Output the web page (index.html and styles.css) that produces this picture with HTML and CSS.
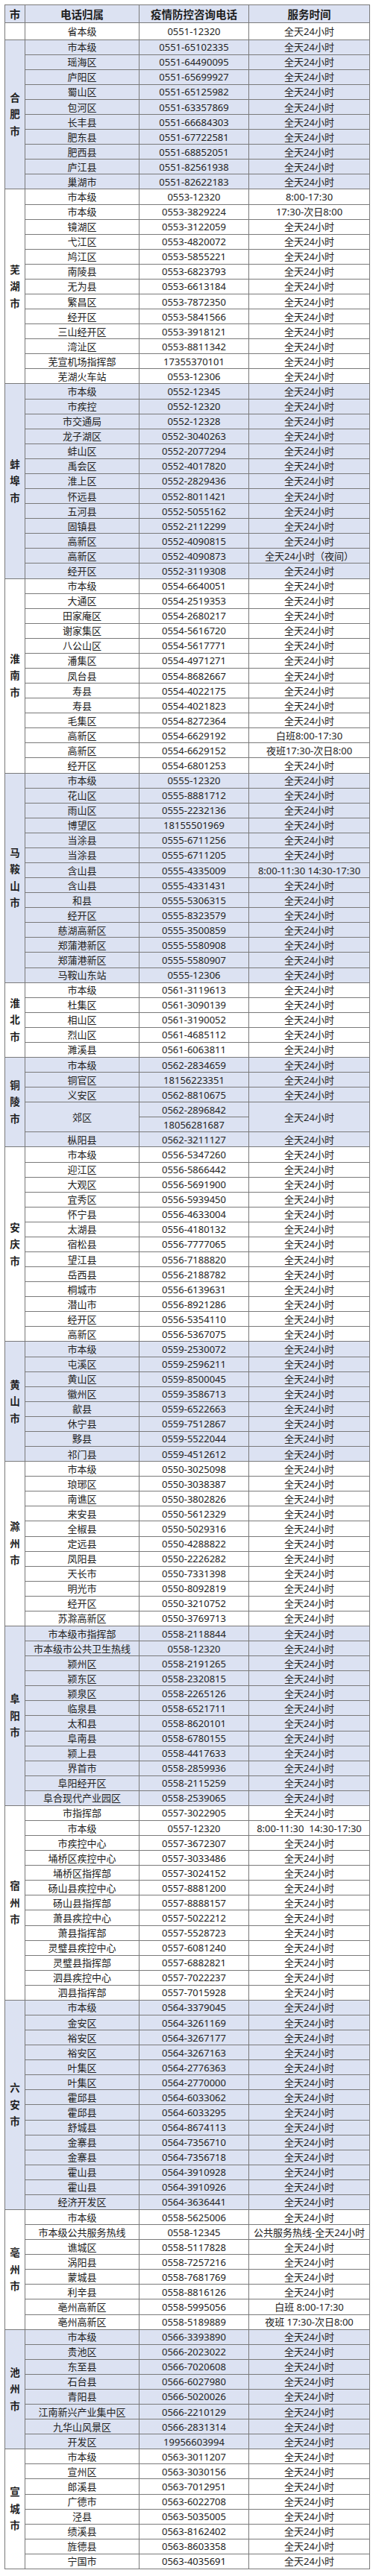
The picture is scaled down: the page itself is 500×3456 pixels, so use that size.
FILE: index.html
```html
<!DOCTYPE html>
<html lang="zh-CN">
<head>
<meta charset="utf-8">
<title>安徽省疫情防控咨询电话</title>
<link rel="stylesheet" href="styles.css">
</head>
<body>
<div class="page">
<table class="hotline">
<colgroup><col class="c-city"><col class="c-name"><col class="c-tel"><col class="c-time"></colgroup>
<thead>
<tr><th>市</th><th>电话归属</th><th>疫情防控咨询电话</th><th>服务时间</th></tr>
</thead>
<tbody class="white prov">
<tr><td></td><td>省本级</td><td>0551-12320</td><td>全天24小时</td></tr>
</tbody>
<tbody class="blue">
<tr><td class="city" rowspan="10">合<br>肥<br>市</td><td>市本级</td><td>0551-65102335</td><td>全天24小时</td></tr>
<tr><td>瑶海区</td><td>0551-64490095</td><td>全天24小时</td></tr>
<tr><td>庐阳区</td><td>0551-65699927</td><td>全天24小时</td></tr>
<tr><td>蜀山区</td><td>0551-65125982</td><td>全天24小时</td></tr>
<tr><td>包河区</td><td>0551-63357869</td><td>全天24小时</td></tr>
<tr><td>长丰县</td><td>0551-66684303</td><td>全天24小时</td></tr>
<tr><td>肥东县</td><td>0551-67722581</td><td>全天24小时</td></tr>
<tr><td>肥西县</td><td>0551-68852051</td><td>全天24小时</td></tr>
<tr><td>庐江县</td><td>0551-82561938</td><td>全天24小时</td></tr>
<tr><td>巢湖市</td><td>0551-82622183</td><td>全天24小时</td></tr>
</tbody>
<tbody class="white">
<tr><td class="city" rowspan="13">芜<br>湖<br>市</td><td>市本级</td><td>0553-12320</td><td>8:00-17:30</td></tr>
<tr><td>市本级</td><td>0553-3829224</td><td>17:30-次日8:00</td></tr>
<tr><td>镜湖区</td><td>0553-3122059</td><td>全天24小时</td></tr>
<tr><td>弋江区</td><td>0553-4820072</td><td>全天24小时</td></tr>
<tr><td>鸠江区</td><td>0553-5855221</td><td>全天24小时</td></tr>
<tr><td>南陵县</td><td>0553-6823793</td><td>全天24小时</td></tr>
<tr><td>无为县</td><td>0553-6613184</td><td>全天24小时</td></tr>
<tr><td>繁昌区</td><td>0553-7872350</td><td>全天24小时</td></tr>
<tr><td>经开区</td><td>0553-5841566</td><td>全天24小时</td></tr>
<tr><td>三山经开区</td><td>0553-3918121</td><td>全天24小时</td></tr>
<tr><td>湾沚区</td><td>0553-8811342</td><td>全天24小时</td></tr>
<tr><td>芜宣机场指挥部</td><td>17355370101</td><td>全天24小时</td></tr>
<tr><td>芜湖火车站</td><td>0553-12306</td><td>全天24小时</td></tr>
</tbody>
<tbody class="blue">
<tr><td class="city" rowspan="13">蚌<br>埠<br>市</td><td>市本级</td><td>0552-12345</td><td>全天24小时</td></tr>
<tr><td>市疾控</td><td>0552-12320</td><td>全天24小时</td></tr>
<tr><td>市交通局</td><td>0552-12328</td><td>全天24小时</td></tr>
<tr><td>龙子湖区</td><td>0552-3040263</td><td>全天24小时</td></tr>
<tr><td>蚌山区</td><td>0552-2077294</td><td>全天24小时</td></tr>
<tr><td>禹会区</td><td>0552-4017820</td><td>全天24小时</td></tr>
<tr><td>淮上区</td><td>0552-2829436</td><td>全天24小时</td></tr>
<tr><td>怀远县</td><td>0552-8011421</td><td>全天24小时</td></tr>
<tr><td>五河县</td><td>0552-5055162</td><td>全天24小时</td></tr>
<tr><td>固镇县</td><td>0552-2112299</td><td>全天24小时</td></tr>
<tr><td>高新区</td><td>0552-4090815</td><td>全天24小时</td></tr>
<tr><td>高新区</td><td>0552-4090873</td><td>全天24小时（夜间）</td></tr>
<tr><td>经开区</td><td>0552-3119308</td><td>全天24小时</td></tr>
</tbody>
<tbody class="white">
<tr><td class="city" rowspan="13">淮<br>南<br>市</td><td>市本级</td><td>0554-6640051</td><td>全天24小时</td></tr>
<tr><td>大通区</td><td>0554-2519353</td><td>全天24小时</td></tr>
<tr><td>田家庵区</td><td>0554-2680217</td><td>全天24小时</td></tr>
<tr><td>谢家集区</td><td>0554-5616720</td><td>全天24小时</td></tr>
<tr><td>八公山区</td><td>0554-5617771</td><td>全天24小时</td></tr>
<tr><td>潘集区</td><td>0554-4971271</td><td>全天24小时</td></tr>
<tr><td>凤台县</td><td>0554-8682667</td><td>全天24小时</td></tr>
<tr><td>寿县</td><td>0554-4022175</td><td>全天24小时</td></tr>
<tr><td>寿县</td><td>0554-4021823</td><td>全天24小时</td></tr>
<tr><td>毛集区</td><td>0554-8272364</td><td>全天24小时</td></tr>
<tr><td>高新区</td><td>0554-6629192</td><td>白班8:00-17:30</td></tr>
<tr><td>高新区</td><td>0554-6629152</td><td>夜班17:30-次日8:00</td></tr>
<tr><td>经开区</td><td>0554-6801253</td><td>全天24小时</td></tr>
</tbody>
<tbody class="blue">
<tr><td class="city" rowspan="14">马<br>鞍<br>山<br>市</td><td>市本级</td><td>0555-12320</td><td>全天24小时</td></tr>
<tr><td>花山区</td><td>0555-8881712</td><td>全天24小时</td></tr>
<tr><td>雨山区</td><td>0555-2232136</td><td>全天24小时</td></tr>
<tr><td>博望区</td><td>18155501969</td><td>全天24小时</td></tr>
<tr><td>当涂县</td><td>0555-6711256</td><td>全天24小时</td></tr>
<tr><td>当涂县</td><td>0555-6711205</td><td>全天24小时</td></tr>
<tr><td>含山县</td><td>0555-4335009</td><td>8:00-11:30 14:30-17:30</td></tr>
<tr><td>含山县</td><td>0555-4331431</td><td>全天24小时</td></tr>
<tr><td>和县</td><td>0555-5306315</td><td>全天24小时</td></tr>
<tr><td>经开区</td><td>0555-8323579</td><td>全天24小时</td></tr>
<tr><td>慈湖高新区</td><td>0555-3500859</td><td>全天24小时</td></tr>
<tr><td>郑蒲港新区</td><td>0555-5580908</td><td>全天24小时</td></tr>
<tr><td>郑蒲港新区</td><td>0555-5580907</td><td>全天24小时</td></tr>
<tr><td>马鞍山东站</td><td>0555-12306</td><td>全天24小时</td></tr>
</tbody>
<tbody class="white">
<tr><td class="city" rowspan="5">淮<br>北<br>市</td><td>市本级</td><td>0561-3119613</td><td>全天24小时</td></tr>
<tr><td>杜集区</td><td>0561-3090139</td><td>全天24小时</td></tr>
<tr><td>相山区</td><td>0561-3190052</td><td>全天24小时</td></tr>
<tr><td>烈山区</td><td>0561-4685112</td><td>全天24小时</td></tr>
<tr><td>濉溪县</td><td>0561-6063811</td><td>全天24小时</td></tr>
</tbody>
<tbody class="blue">
<tr><td class="city" rowspan="6">铜<br>陵<br>市</td><td>市本级</td><td>0562-2834659</td><td>全天24小时</td></tr>
<tr><td>铜官区</td><td>18156223351</td><td>全天24小时</td></tr>
<tr><td>义安区</td><td>0562-8810675</td><td>全天24小时</td></tr>
<tr><td rowspan="2">郊区</td><td>0562-2896842</td><td rowspan="2">全天24小时</td></tr>
<tr><td>18056281687</td></tr>
<tr><td>枞阳县</td><td>0562-3211127</td><td>全天24小时</td></tr>
</tbody>
<tbody class="white">
<tr><td class="city" rowspan="13">安<br>庆<br>市</td><td>市本级</td><td>0556-5347260</td><td>全天24小时</td></tr>
<tr><td>迎江区</td><td>0556-5866442</td><td>全天24小时</td></tr>
<tr><td>大观区</td><td>0556-5691900</td><td>全天24小时</td></tr>
<tr><td>宜秀区</td><td>0556-5939450</td><td>全天24小时</td></tr>
<tr><td>怀宁县</td><td>0556-4633004</td><td>全天24小时</td></tr>
<tr><td>太湖县</td><td>0556-4180132</td><td>全天24小时</td></tr>
<tr><td>宿松县</td><td>0556-7777065</td><td>全天24小时</td></tr>
<tr><td>望江县</td><td>0556-7188820</td><td>全天24小时</td></tr>
<tr><td>岳西县</td><td>0556-2188782</td><td>全天24小时</td></tr>
<tr><td>桐城市</td><td>0556-6139631</td><td>全天24小时</td></tr>
<tr><td>潜山市</td><td>0556-8921286</td><td>全天24小时</td></tr>
<tr><td>经开区</td><td>0556-5354110</td><td>全天24小时</td></tr>
<tr><td>高新区</td><td>0556-5367075</td><td>全天24小时</td></tr>
</tbody>
<tbody class="blue">
<tr><td class="city" rowspan="8">黄<br>山<br>市</td><td>市本级</td><td>0559-2530072</td><td>全天24小时</td></tr>
<tr><td>屯溪区</td><td>0559-2596211</td><td>全天24小时</td></tr>
<tr><td>黄山区</td><td>0559-8500045</td><td>全天24小时</td></tr>
<tr><td>徽州区</td><td>0559-3586713</td><td>全天24小时</td></tr>
<tr><td>歙县</td><td>0559-6522663</td><td>全天24小时</td></tr>
<tr><td>休宁县</td><td>0559-7512867</td><td>全天24小时</td></tr>
<tr><td>黟县</td><td>0559-5522044</td><td>全天24小时</td></tr>
<tr><td>祁门县</td><td>0559-4512612</td><td>全天24小时</td></tr>
</tbody>
<tbody class="white">
<tr><td class="city" rowspan="11">滁<br>州<br>市</td><td>市本级</td><td>0550-3025098</td><td>全天24小时</td></tr>
<tr><td>琅琊区</td><td>0550-3038387</td><td>全天24小时</td></tr>
<tr><td>南谯区</td><td>0550-3802826</td><td>全天24小时</td></tr>
<tr><td>来安县</td><td>0550-5612329</td><td>全天24小时</td></tr>
<tr><td>全椒县</td><td>0550-5029316</td><td>全天24小时</td></tr>
<tr><td>定远县</td><td>0550-4288822</td><td>全天24小时</td></tr>
<tr><td>凤阳县</td><td>0550-2226282</td><td>全天24小时</td></tr>
<tr><td>天长市</td><td>0550-7331398</td><td>全天24小时</td></tr>
<tr><td>明光市</td><td>0550-8092819</td><td>全天24小时</td></tr>
<tr><td>经开区</td><td>0550-3210752</td><td>全天24小时</td></tr>
<tr><td>苏滁高新区</td><td>0550-3769713</td><td>全天24小时</td></tr>
</tbody>
<tbody class="blue">
<tr><td class="city" rowspan="12">阜<br>阳<br>市</td><td>市本级市指挥部</td><td>0558-2118844</td><td>全天24小时</td></tr>
<tr><td>市本级市公共卫生热线</td><td>0558-12320</td><td>全天24小时</td></tr>
<tr><td>颍州区</td><td>0558-2191265</td><td>全天24小时</td></tr>
<tr><td>颍东区</td><td>0558-2320815</td><td>全天24小时</td></tr>
<tr><td>颍泉区</td><td>0558-2265126</td><td>全天24小时</td></tr>
<tr><td>临泉县</td><td>0558-6521711</td><td>全天24小时</td></tr>
<tr><td>太和县</td><td>0558-8620101</td><td>全天24小时</td></tr>
<tr><td>阜南县</td><td>0558-6780155</td><td>全天24小时</td></tr>
<tr><td>颍上县</td><td>0558-4417633</td><td>全天24小时</td></tr>
<tr><td>界首市</td><td>0558-2859936</td><td>全天24小时</td></tr>
<tr><td>阜阳经开区</td><td>0558-2115259</td><td>全天24小时</td></tr>
<tr><td>阜合现代产业园区</td><td>0558-2539065</td><td>全天24小时</td></tr>
</tbody>
<tbody class="white">
<tr><td class="city" rowspan="13">宿<br>州<br>市</td><td>市指挥部</td><td>0557-3022905</td><td>全天24小时</td></tr>
<tr><td>市本级</td><td>0557-12320</td><td>8:00-11:30&nbsp; 14:30-17:30</td></tr>
<tr><td>市疾控中心</td><td>0557-3672307</td><td>全天24小时</td></tr>
<tr><td>埇桥区疾控中心</td><td>0557-3033486</td><td>全天24小时</td></tr>
<tr><td>埇桥区指挥部</td><td>0557-3024152</td><td>全天24小时</td></tr>
<tr><td>砀山县疾控中心</td><td>0557-8881200</td><td>全天24小时</td></tr>
<tr><td>砀山县指挥部</td><td>0557-8888157</td><td>全天24小时</td></tr>
<tr><td>萧县疾控中心</td><td>0557-5022212</td><td>全天24小时</td></tr>
<tr><td>萧县指挥部</td><td>0557-5528723</td><td>全天24小时</td></tr>
<tr><td>灵璧县疾控中心</td><td>0557-6081240</td><td>全天24小时</td></tr>
<tr><td>灵璧县指挥部</td><td>0557-6882821</td><td>全天24小时</td></tr>
<tr><td>泗县疾控中心</td><td>0557-7022237</td><td>全天24小时</td></tr>
<tr><td>泗县指挥部</td><td>0557-7015928</td><td>全天24小时</td></tr>
</tbody>
<tbody class="blue">
<tr><td class="city" rowspan="14">六<br>安<br>市</td><td>市本级</td><td>0564-3379045</td><td>全天24小时</td></tr>
<tr><td>金安区</td><td>0564-3261169</td><td>全天24小时</td></tr>
<tr><td>裕安区</td><td>0564-3267177</td><td>全天24小时</td></tr>
<tr><td>裕安区</td><td>0564-3267163</td><td>全天24小时</td></tr>
<tr><td>叶集区</td><td>0564-2776363</td><td>全天24小时</td></tr>
<tr><td>叶集区</td><td>0564-2770000</td><td>全天24小时</td></tr>
<tr><td>霍邱县</td><td>0564-6033062</td><td>全天24小时</td></tr>
<tr><td>霍邱县</td><td>0564-6033295</td><td>全天24小时</td></tr>
<tr><td>舒城县</td><td>0564-8674113</td><td>全天24小时</td></tr>
<tr><td>金寨县</td><td>0564-7356710</td><td>全天24小时</td></tr>
<tr><td>金寨县</td><td>0564-7356718</td><td>全天24小时</td></tr>
<tr><td>霍山县</td><td>0564-3910928</td><td>全天24小时</td></tr>
<tr><td>霍山县</td><td>0564-3910926</td><td>全天24小时</td></tr>
<tr><td>经济开发区</td><td>0564-3636441</td><td>全天24小时</td></tr>
</tbody>
<tbody class="white">
<tr><td class="city" rowspan="8">亳<br>州<br>市</td><td>市本级</td><td>0558-5625006</td><td>全天24小时</td></tr>
<tr><td>市本级公共服务热线</td><td>0558-12345</td><td>公共服务热线-全天24小时</td></tr>
<tr><td>谯城区</td><td>0558-5117828</td><td>全天24小时</td></tr>
<tr><td>涡阳县</td><td>0558-7257216</td><td>全天24小时</td></tr>
<tr><td>蒙城县</td><td>0558-7681769</td><td>全天24小时</td></tr>
<tr><td>利辛县</td><td>0558-8816126</td><td>全天24小时</td></tr>
<tr><td>亳州高新区</td><td>0558-5995056</td><td>白班 8:00-17:30</td></tr>
<tr><td>亳州高新区</td><td>0558-5189889</td><td>夜班 17:30-次日8:00</td></tr>
</tbody>
<tbody class="blue">
<tr><td class="city" rowspan="8">池<br>州<br>市</td><td>市本级</td><td>0566-3393890</td><td>全天24小时</td></tr>
<tr><td>贵池区</td><td>0566-2023022</td><td>全天24小时</td></tr>
<tr><td>东至县</td><td>0566-7020608</td><td>全天24小时</td></tr>
<tr><td>石台县</td><td>0566-6027980</td><td>全天24小时</td></tr>
<tr><td>青阳县</td><td>0566-5020026</td><td>全天24小时</td></tr>
<tr><td>江南新兴产业集中区</td><td>0566-2210129</td><td>全天24小时</td></tr>
<tr><td>九华山风景区</td><td>0566-2831314</td><td>全天24小时</td></tr>
<tr><td>开发区</td><td>19956603994</td><td>全天24小时</td></tr>
</tbody>
<tbody class="white">
<tr><td class="city" rowspan="8">宣<br>城<br>市</td><td>市本级</td><td>0563-3011207</td><td>全天24小时</td></tr>
<tr><td>宣州区</td><td>0563-3030156</td><td>全天24小时</td></tr>
<tr><td>郎溪县</td><td>0563-7012951</td><td>全天24小时</td></tr>
<tr><td>广德市</td><td>0563-6022708</td><td>全天24小时</td></tr>
<tr><td>泾县</td><td>0563-5035005</td><td>全天24小时</td></tr>
<tr><td>绩溪县</td><td>0563-8162402</td><td>全天24小时</td></tr>
<tr><td>旌德县</td><td>0563-8603358</td><td>全天24小时</td></tr>
<tr><td>宁国市</td><td>0563-4035691</td><td>全天24小时</td></tr>
</tbody>
</table>
</div>
</body>
</html>
```

FILE: styles.css
```css
html, body {
  margin: 0;
  padding: 0;
  background: #ffffff;
}

body {
  font-family: "Noto Sans", "Noto Sans CJK SC", sans-serif;
  color: #222222;
}

.page {
  padding: 6px 0 0 6px;
}

.hotline {
  border-collapse: collapse;
  table-layout: fixed;
  width: 489px;
}

.c-city { width: 27px; }
.c-name { width: 153px; }
.c-tel  { width: 147px; }
.c-time { width: 162px; }

.hotline th,
.hotline td {
  border: 1px solid #7a7a7a;
  padding: 0;
  text-align: center;
  vertical-align: middle;
  white-space: nowrap;
  font-size: 13px;
  line-height: 16px;
  overflow: hidden;
}

.hotline thead th {
  height: 23.3px;
  background: #dce2f2;
  font-size: 14.5px;
  font-weight: 700;
  color: #1e1e1e;
}

.hotline tbody tr {
  height: 20.09px;
}

.hotline tbody.prov tr {
  height: 22.4px;
}

.blue td {
  background: #dce2f2;
}

.white td {
  background: #ffffff;
}

.hotline td.city {
  font-size: 13.5px;
  font-weight: 700;
  line-height: 22.5px;
  color: #1e1e1e;
}
```
